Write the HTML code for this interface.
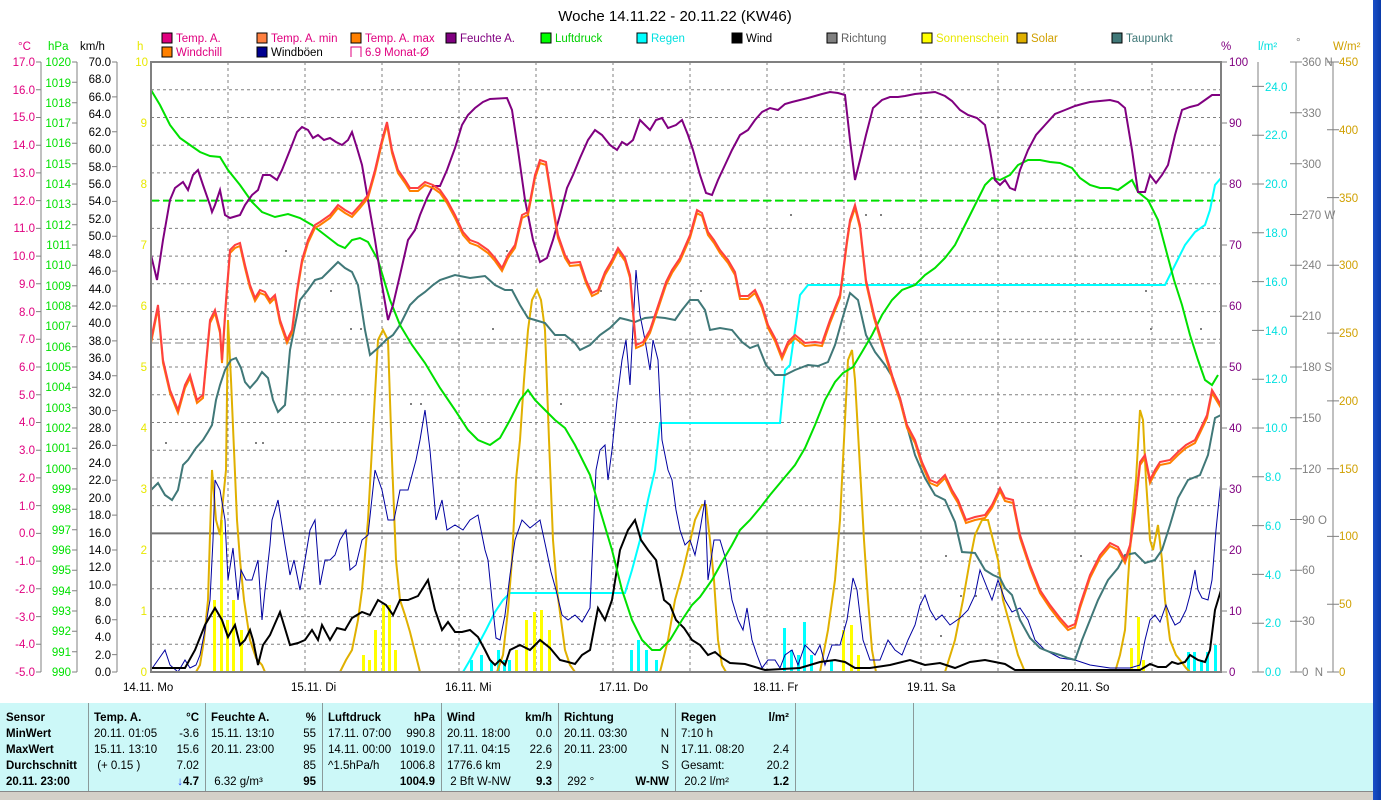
<!DOCTYPE html>
<html><head><meta charset="utf-8"><style>
html,body{margin:0;padding:0;background:#fff;width:1381px;height:800px;overflow:hidden;position:relative;font-family:"Liberation Sans",sans-serif}
svg{position:absolute;left:0;top:0}
.tb{position:absolute;left:0;top:703px;width:1373px;height:88px;background:#ccf8f8}
.c{position:absolute;top:0;height:88px;border-right:1px solid #8a9a9a;font-size:11.5px;color:#000}
.r{position:absolute;left:6px;right:6px;height:16px;line-height:16px;white-space:nowrap}
.r span{position:absolute;right:0}
.b{font-weight:bold}
.sb{position:absolute;left:0;top:791px;width:1373px;height:9px;background:#d4d0c8;border-top:1px solid #888}
.blue{position:absolute;left:1373px;top:0;width:8px;height:800px;background:linear-gradient(90deg,#1a4fc8,#0a3aa8)}
</style></head><body>
<svg width="1381" height="800" viewBox="0 0 1381 800" font-family="Liberation Sans, sans-serif" font-size="11.5">
<text x="675" y="21" font-size="15" text-anchor="middle" fill="#000">Woche 14.11.22 - 20.11.22 (KW46)</text>
<!-- legend -->
<g font-size="11.5">
<rect x="162" y="33" width="10" height="10" fill="#e0007f" stroke="#000"/><text x="176" y="42" fill="#e0007f">Temp. A.</text>
<rect x="257" y="33" width="10" height="10" fill="#ff8040" stroke="#000"/><text x="271" y="42" fill="#e0007f">Temp. A. min</text>
<rect x="351" y="33" width="10" height="10" fill="#ff8000" stroke="#000"/><text x="365" y="42" fill="#e0007f">Temp. A. max</text>
<rect x="446" y="33" width="10" height="10" fill="#800080" stroke="#000"/><text x="460" y="42" fill="#800080">Feuchte A.</text>
<rect x="541" y="33" width="10" height="10" fill="#00ff00" stroke="#000"/><text x="555" y="42" fill="#00d000">Luftdruck</text>
<rect x="637" y="33" width="10" height="10" fill="#00ffff" stroke="#000"/><text x="651" y="42" fill="#00e0e0">Regen</text>
<rect x="732" y="33" width="10" height="10" fill="#000" stroke="#000"/><text x="746" y="42" fill="#000">Wind</text>
<rect x="827" y="33" width="10" height="10" fill="#808080" stroke="#000"/><text x="841" y="42" fill="#606060">Richtung</text>
<rect x="922" y="33" width="10" height="10" fill="#ffff00" stroke="#000"/><text x="936" y="42" fill="#e8e800">Sonnenschein</text>
<rect x="1017" y="33" width="10" height="10" fill="#e0b000" stroke="#000"/><text x="1031" y="42" fill="#d0a000">Solar</text>
<rect x="1112" y="33" width="10" height="10" fill="#407878" stroke="#000"/><text x="1126" y="42" fill="#407878">Taupunkt</text>
<rect x="162" y="47" width="10" height="10" fill="#ff8000" stroke="#000"/><text x="176" y="56" fill="#e0007f">Windchill</text>
<rect x="257" y="47" width="10" height="10" fill="#000090" stroke="#000"/><text x="271" y="56" fill="#000">Windböen</text>
<path d="M351 57V47H361V57" fill="none" stroke="#e0007f"/><text x="365" y="56" fill="#e0007f">6.9 Monat-Ø</text>
</g>
<!-- units -->
<text x="18" y="50" fill="#e0007f">°C</text><text x="48" y="50" fill="#00e000">hPa</text><text x="80" y="50" fill="#000">km/h</text><text x="137" y="50" fill="#e8e800">h</text>
<text x="1221" y="50" fill="#800080">%</text><text x="1258" y="50" fill="#00e0e0">l/m²</text><text x="1296" y="46" fill="#808080">°</text><text x="1333" y="50" fill="#d0a000">W/m²</text>
<!-- grid -->
<g stroke="#808080" stroke-dasharray="3,3" stroke-width="1">
<path d="M151 89.7H1221M151 117.5H1221M151 145.2H1221M151 172.9H1221M151 200.6H1221M151 228.4H1221M151 256.1H1221M151 283.8H1221M151 311.6H1221M151 339.3H1221M151 367H1221M151 394.7H1221M151 422.5H1221M151 450.2H1221M151 477.9H1221M151 505.6H1221M151 561.1H1221M151 588.8H1221M151 616.6H1221M151 644.3H1221"/>
<path d="M228 62V672M305 62V672M382 62V672M459 62V672M536 62V672M613 62V672M690 62V672M767 62V672M844 62V672M921 62V672M998 62V672M1075 62V672M1152 62V672"/>
</g>
<path d="M151 533.4H1221" stroke="#707070" stroke-width="2"/>
<path d="M151 343H1221" stroke="#808080" stroke-dasharray="8,4"/>
<path d="M151 200.6H1221" stroke="#00e000" stroke-width="2" stroke-dasharray="8,4"/>
<!-- direction dots -->
<g fill="#808080">
<rect x="165" y="442" width="2" height="2"/><rect x="255" y="442" width="2" height="2"/><rect x="262" y="442" width="2" height="2"/><rect x="285" y="250" width="2" height="2"/><rect x="330" y="290" width="2" height="2"/><rect x="350" y="328" width="2" height="2"/><rect x="360" y="328" width="2" height="2"/><rect x="410" y="403" width="2" height="2"/><rect x="420" y="403" width="2" height="2"/><rect x="492" y="328" width="2" height="2"/><rect x="506" y="250" width="2" height="2"/><rect x="560" y="403" width="2" height="2"/><rect x="600" y="290" width="2" height="2"/><rect x="700" y="290" width="2" height="2"/><rect x="790" y="214" width="2" height="2"/><rect x="865" y="214" width="2" height="2"/><rect x="880" y="214" width="2" height="2"/><rect x="945" y="555" width="2" height="2"/><rect x="960" y="595" width="2" height="2"/><rect x="975" y="595" width="2" height="2"/><rect x="940" y="635" width="2" height="2"/><rect x="1080" y="555" width="2" height="2"/><rect x="1145" y="290" width="2" height="2"/><rect x="1150" y="328" width="2" height="2"/><rect x="1200" y="328" width="2" height="2"/>
</g>
<!-- sunshine bars -->
<g fill="#ffff00">
<rect x="213" y="600" width="3" height="72"/><rect x="220" y="520" width="3" height="152"/><rect x="226" y="620" width="3" height="52"/><rect x="232" y="600" width="3" height="72"/><rect x="240" y="630" width="3" height="42"/><rect x="362" y="655" width="3" height="17"/><rect x="368" y="660" width="3" height="12"/><rect x="374" y="630" width="3" height="42"/><rect x="382" y="605" width="3" height="67"/><rect x="388" y="605" width="3" height="67"/><rect x="394" y="650" width="3" height="22"/><rect x="515" y="650" width="3" height="22"/><rect x="525" y="620" width="3" height="52"/><rect x="533" y="612" width="3" height="60"/><rect x="540" y="610" width="3" height="62"/><rect x="548" y="630" width="3" height="42"/><rect x="842" y="630" width="3" height="42"/><rect x="850" y="625" width="3" height="47"/><rect x="857" y="655" width="3" height="17"/><rect x="1130" y="648" width="3" height="24"/><rect x="1137" y="617" width="3" height="55"/><rect x="1142" y="660" width="3" height="12"/>
</g>
<!-- rain bars -->
<g fill="#00ffff">
<rect x="470" y="660" width="3" height="12"/><rect x="480" y="655" width="3" height="17"/><rect x="490" y="662" width="3" height="10"/><rect x="497" y="650" width="3" height="22"/><rect x="503" y="660" width="3" height="12"/><rect x="508" y="660" width="3" height="12"/><rect x="630" y="650" width="3" height="22"/><rect x="637" y="640" width="3" height="32"/><rect x="645" y="650" width="3" height="22"/><rect x="655" y="660" width="3" height="12"/><rect x="783" y="628" width="3" height="44"/><rect x="790" y="650" width="3" height="22"/><rect x="797" y="655" width="3" height="17"/><rect x="803" y="622" width="3" height="50"/><rect x="810" y="655" width="3" height="17"/><rect x="830" y="660" width="3" height="12"/><rect x="1187" y="652" width="3" height="20"/><rect x="1193" y="652" width="3" height="20"/><rect x="1200" y="660" width="3" height="12"/><rect x="1206" y="652" width="3" height="20"/><rect x="1214" y="645" width="3" height="27"/>
</g>
<!-- rain cumulative -->
<polyline fill="none" stroke="#00ffff" stroke-width="2" points="151,672 463,672 470,660 478,645 486,630 495,612 503,600 510,593 625,593 632,570 640,540 648,500 655,470 660,423 780,423 785,370 790,365 800,295 808,285 830,285 1165,285 1175,265 1185,245 1195,232 1205,225 1210,210 1215,185 1221,178"/>
<!-- solar -->
<polyline fill="none" stroke="#e0b000" stroke-width="2" points="151,672 196,672 200,665 204,640 208,600 212,470 216,520 220,535 223,500 226,470 228,320 231,380 234,450 237,520 240,560 244,600 250,640 256,658 262,665 265,672 340,672 346,660 352,650 358,620 362,590 368,520 373,430 378,340 383,330 388,340 392,460 396,560 400,600 405,615 410,632 417,660 420,672 497,672 503,655 508,610 512,560 516,480 520,440 524,380 528,330 532,300 537,290 541,300 545,330 549,440 553,540 557,590 561,620 565,650 570,665 575,672 660,672 668,640 675,600 682,575 688,550 695,520 702,505 706,505 710,540 714,580 718,640 722,665 726,672 820,672 828,630 835,580 840,520 845,420 848,360 852,350 855,380 859,450 864,540 868,600 872,650 876,672 945,672 955,640 963,600 970,560 975,535 982,520 988,520 993,540 998,560 1003,600 1010,625 1018,655 1025,672 1115,672 1120,655 1125,630 1128,580 1132,520 1136,480 1140,410 1143,420 1146,480 1150,540 1153,550 1158,525 1162,560 1165,600 1170,640 1176,655 1180,660 1186,668 1190,672 1221,672"/>
<!-- gusts -->
<polyline fill="none" stroke="#0000a0" stroke-width="1" points="151,670 158,660 165,650 170,665 178,672 185,660 190,668 196,665 200,655 205,630 210,600 213,540 215,480 220,490 225,520 228,580 233,548 238,600 241,570 246,580 252,580 258,560 262,620 265,590 270,545 272,520 278,500 285,545 290,575 294,560 300,590 305,560 310,530 315,520 320,585 325,560 330,560 335,555 340,540 346,530 350,570 356,565 362,540 368,535 375,470 382,490 388,520 394,520 400,490 408,490 416,460 420,440 425,410 430,450 436,520 442,500 447,530 455,525 463,530 470,520 478,515 485,550 488,560 492,600 496,638 500,640 505,615 510,575 515,540 522,520 530,528 540,520 546,548 551,572 556,590 562,615 568,620 575,615 582,622 590,608 596,470 600,450 605,445 608,480 612,450 617,400 622,360 626,340 630,385 636,270 640,315 645,340 650,370 653,340 658,360 662,440 668,470 672,480 676,510 680,530 685,545 690,540 695,555 700,530 705,500 708,580 714,540 720,540 726,560 732,600 738,620 743,630 747,608 752,640 757,655 762,668 768,660 775,660 780,668 785,655 792,650 798,665 805,645 810,650 815,655 820,645 825,665 832,645 840,645 847,620 853,578 857,590 863,640 870,660 880,660 888,640 895,650 902,655 908,640 915,625 920,605 925,595 930,610 936,620 942,615 950,625 960,618 968,610 975,595 980,570 986,585 992,600 998,580 1005,600 1012,612 1020,608 1028,620 1035,640 1045,650 1060,658 1075,660 1090,665 1110,668 1130,668 1140,665 1145,640 1150,620 1155,615 1160,622 1166,605 1170,615 1175,625 1180,622 1186,610 1190,595 1195,570 1198,590 1202,598 1208,600 1212,580 1216,530 1221,480"/>
<!-- wind -->
<polyline fill="none" stroke="#000" stroke-width="2" points="151,668 185,668 195,650 205,625 215,608 222,620 228,637 235,625 240,645 245,640 250,630 253,640 258,665 263,645 270,635 280,612 290,645 298,643 305,640 312,630 318,640 322,625 330,640 337,628 345,630 352,618 362,612 370,615 378,600 386,605 393,615 400,600 408,600 418,596 428,580 435,610 442,630 448,622 455,632 462,632 470,630 478,637 485,650 490,660 495,665 500,660 505,665 510,650 520,645 530,650 540,640 550,648 560,660 568,662 575,664 582,655 590,650 598,608 605,620 612,600 620,550 628,530 635,520 641,540 648,550 656,560 664,600 670,605 676,620 684,628 692,640 700,645 708,655 715,652 722,658 730,663 745,664 755,667 765,670 800,668 820,662 835,660 845,662 855,668 870,668 890,665 910,660 925,665 940,663 955,668 970,662 985,660 995,662 1005,664 1015,670 1140,670 1150,664 1158,667 1166,667 1172,662 1178,664 1185,662 1190,655 1198,660 1205,662 1210,650 1215,610 1221,590"/>
<!-- dew point -->
<polyline fill="none" stroke="#407878" stroke-width="2" points="151,490 158,483 165,495 172,500 178,490 183,465 188,460 196,448 203,440 208,432 212,425 216,400 220,385 225,370 231,360 236,358 241,368 245,382 250,388 257,380 262,372 268,378 273,400 278,412 285,405 290,350 300,300 308,290 315,280 322,278 330,270 338,262 345,268 352,272 358,285 365,330 370,355 378,348 386,340 393,335 400,325 410,305 418,297 425,292 433,285 440,280 455,275 470,278 485,276 495,285 505,290 512,290 520,305 528,318 535,320 545,323 555,335 565,335 575,343 580,350 590,345 600,335 610,328 620,318 628,320 635,322 645,318 655,317 665,318 675,320 682,310 690,300 698,300 705,310 710,330 720,328 732,330 742,342 750,348 758,345 766,365 775,375 785,375 795,370 808,365 818,366 828,362 835,345 842,320 850,293 858,300 866,335 875,352 885,365 893,378 900,398 908,430 915,455 925,478 935,495 945,500 955,522 962,552 975,553 985,570 993,575 1000,578 1005,588 1012,595 1020,620 1030,638 1040,648 1050,652 1060,655 1068,658 1075,660 1082,640 1090,620 1098,600 1108,580 1118,568 1125,555 1135,553 1145,563 1155,560 1162,550 1170,525 1178,498 1188,480 1200,475 1208,455 1215,418 1221,415"/>
<!-- pressure -->
<polyline fill="none" stroke="#00e000" stroke-width="2" points="151,90 160,105 170,125 180,138 190,145 200,152 210,156 220,157 228,170 240,185 252,202 262,212 275,217 288,214 300,218 312,225 325,235 338,245 345,248 352,240 360,238 368,242 378,260 390,300 400,325 412,345 425,363 440,388 455,410 468,430 478,440 490,445 500,438 510,420 520,400 528,390 535,400 545,410 555,420 565,428 575,445 590,475 600,510 612,550 622,590 632,620 642,640 652,650 660,650 670,640 682,620 692,605 700,597 712,580 722,562 732,545 740,530 750,520 760,508 770,495 780,483 795,465 805,448 815,425 825,400 835,382 843,373 853,367 862,352 872,335 882,315 892,300 902,290 915,285 925,275 935,268 945,258 955,245 965,225 975,205 985,185 992,178 1000,180 1010,175 1018,165 1028,160 1040,160 1050,162 1060,163 1072,168 1080,178 1090,185 1100,188 1110,188 1118,190 1125,185 1132,180 1138,192 1148,200 1158,220 1166,250 1174,280 1182,305 1190,335 1198,360 1205,380 1212,385 1218,375"/>
<!-- humidity -->
<polyline fill="none" stroke="#800080" stroke-width="2" points="151,255 157,280 163,240 170,200 175,188 183,182 188,190 193,175 198,170 203,185 210,205 212,212 215,205 220,190 225,215 230,218 240,215 245,205 252,195 258,190 263,175 270,175 277,180 282,170 290,150 297,132 302,127 308,130 313,138 318,135 324,140 330,138 336,142 342,145 348,140 352,132 357,148 362,165 368,200 375,240 382,285 388,320 393,305 400,275 408,240 415,230 420,215 427,198 433,186 440,186 447,170 455,148 462,125 468,115 475,108 483,102 490,99 507,98 512,110 518,150 525,200 533,240 540,262 547,258 553,240 560,215 567,188 573,175 580,158 588,140 595,130 602,135 610,145 617,150 622,142 627,145 633,140 640,120 645,125 650,130 656,120 662,118 668,128 676,125 682,120 688,135 693,150 700,175 706,193 712,195 718,180 725,165 732,150 740,135 748,130 755,120 762,112 770,108 778,110 785,104 792,102 800,100 808,98 815,96 822,94 830,92 838,93 845,95 850,140 855,180 860,160 866,135 873,108 882,100 890,97 898,97 905,96 915,94 935,92 945,96 952,101 960,110 968,115 977,118 985,125 990,150 995,180 1000,185 1005,180 1010,188 1015,190 1020,170 1028,150 1036,135 1045,125 1055,114 1065,110 1075,106 1082,104 1090,102 1110,100 1118,102 1125,108 1132,150 1138,192 1145,192 1150,175 1156,183 1162,175 1168,165 1175,135 1182,110 1190,107 1198,105 1205,100 1212,95 1221,95"/>
<!-- temp min/max shadow + temp -->
<polyline fill="none" stroke="#ff8000" stroke-width="2" transform="translate(0,3)" points="151,340 158,305 163,360 170,390 178,410 185,385 190,375 197,400 203,395 210,320 215,310 220,330 222,360 226,300 230,250 235,245 240,243 245,265 250,285 255,298 260,290 265,292 270,300 275,295 280,320 287,340 292,330 297,290 302,260 308,240 315,225 320,222 330,215 338,205 345,210 352,214 360,205 368,195 375,170 382,140 387,122 392,150 398,170 405,180 410,188 418,188 425,182 433,185 440,190 447,200 455,215 463,232 470,240 478,243 488,250 495,258 502,268 508,255 515,245 522,215 528,212 535,175 540,160 546,162 552,200 558,235 565,255 570,263 580,262 586,280 592,293 598,290 605,272 612,260 618,248 625,258 630,275 636,345 643,342 650,330 660,300 666,282 672,270 680,258 690,235 697,210 702,213 708,232 714,240 720,250 728,260 735,272 740,296 748,296 755,290 762,305 768,325 775,338 782,356 788,342 795,335 805,343 815,342 822,343 830,320 840,295 847,240 850,220 855,205 860,225 866,280 874,315 880,335 887,358 893,378 900,398 907,425 915,440 922,462 930,480 937,483 945,475 952,490 958,500 966,520 975,517 985,515 992,505 1000,488 1005,498 1013,500 1020,535 1030,565 1040,590 1050,605 1060,618 1068,627 1075,624 1080,605 1090,575 1100,555 1110,543 1118,547 1125,560 1130,545 1135,510 1140,462 1145,455 1150,480 1155,470 1160,462 1170,460 1178,452 1186,445 1195,440 1200,430 1207,415 1212,390 1218,400 1221,405"/>
<polyline fill="none" stroke="#ff4040" stroke-width="2" points="151,340 158,305 163,360 170,390 178,410 185,385 190,375 197,400 203,395 210,320 215,310 220,330 222,360 226,300 230,250 235,245 240,243 245,265 250,285 255,298 260,290 265,292 270,300 275,295 280,320 287,340 292,330 297,290 302,260 308,240 315,225 320,222 330,215 338,205 345,210 352,214 360,205 368,195 375,170 382,140 387,122 392,150 398,170 405,180 410,188 418,188 425,182 433,185 440,190 447,200 455,215 463,232 470,240 478,243 488,250 495,258 502,268 508,255 515,245 522,215 528,212 535,175 540,160 546,162 552,200 558,235 565,255 570,263 580,262 586,280 592,293 598,290 605,272 612,260 618,248 625,258 630,275 636,345 643,342 650,330 660,300 666,282 672,270 680,258 690,235 697,210 702,213 708,232 714,240 720,250 728,260 735,272 740,296 748,296 755,290 762,305 768,325 775,338 782,356 788,342 795,335 805,343 815,342 822,343 830,320 840,295 847,240 850,220 855,205 860,225 866,280 874,315 880,335 887,358 893,378 900,398 907,425 915,440 922,462 930,480 937,483 945,475 952,490 958,500 966,520 975,517 985,515 992,505 1000,488 1005,498 1013,500 1020,535 1030,565 1040,590 1050,605 1060,618 1068,627 1075,624 1080,605 1090,575 1100,555 1110,543 1118,547 1125,560 1130,545 1135,510 1140,462 1145,455 1150,480 1155,470 1160,462 1170,460 1178,452 1186,445 1195,440 1200,430 1207,415 1212,390 1218,400 1221,405"/>
<!-- plot border -->
<path d="M151 62H1221V672H151Z" fill="none" stroke="#808080" stroke-width="2"/>
<!-- left axes lines -->
<g stroke="#808080" fill="none">
<path d="M41 62V672M77 62V672M117 62V672M1258 62V672M1296 62V672M1333 62V672"/>
<path d="M36 62H41M36 89.7H41M36 117.5H41M36 145.2H41M36 172.9H41M36 200.6H41M36 228.4H41M36 256.1H41M36 283.8H41M36 311.6H41M36 339.3H41M36 367H41M36 394.7H41M36 422.5H41M36 450.2H41M36 477.9H41M36 505.6H41M36 533.4H41M36 561.1H41M36 588.8H41M36 616.6H41M36 644.3H41M36 672H41"/>
<path d="M72 62H77M72 82.3H77M72 102.7H77M72 123H77M72 143.3H77M72 163.7H77M72 184H77M72 204.3H77M72 224.7H77M72 245H77M72 265.3H77M72 285.7H77M72 306H77M72 326.3H77M72 346.7H77M72 367H77M72 387.3H77M72 407.7H77M72 428H77M72 448.3H77M72 468.7H77M72 489H77M72 509.3H77M72 529.7H77M72 550H77M72 570.3H77M72 590.7H77M72 611H77M72 631.3H77M72 651.7H77M72 672H77"/>
<path d="M112 62H117M112 96.9H117M112 131.7H117M112 166.6H117M112 201.4H117M112 236.3H117M112 271.1H117M112 306H117M112 340.9H117M112 375.7H117M112 410.6H117M112 445.4H117M112 480.3H117M112 515.1H117M112 550H117M112 584.9H117M112 619.7H117M112 654.6H117M112 672H117"/>
<path d="M1221 62H1227M1221 123H1227M1221 184H1227M1221 245H1227M1221 306H1227M1221 367H1227M1221 428H1227M1221 489H1227M1221 550H1227M1221 611H1227M1221 672H1227"/>
<path d="M1252 86.4H1264M1252 135.2H1264M1252 184H1264M1252 232.8H1264M1252 281.6H1264M1252 330.4H1264M1252 379.2H1264M1252 428H1264M1252 476.8H1264M1252 525.6H1264M1252 574.4H1264M1252 623.2H1264M1252 672H1264"/>
<path d="M1290 62H1302M1290 112.8H1302M1290 163.7H1302M1290 214.5H1302M1290 265.3H1302M1290 316.2H1302M1290 367H1302M1290 417.8H1302M1290 468.7H1302M1290 519.5H1302M1290 570.3H1302M1290 621.2H1302M1290 672H1302"/>
<path d="M1327 62H1339M1327 129.8H1339M1327 197.6H1339M1327 265.3H1339M1327 333.1H1339M1327 400.9H1339M1327 468.7H1339M1327 536.4H1339M1327 604.2H1339M1327 672H1339"/>
</g>
<g fill="#e0007f" text-anchor="end">
<text x="35" y="66">17.0</text><text x="35" y="94">16.0</text><text x="35" y="121">15.0</text><text x="35" y="149">14.0</text><text x="35" y="177">13.0</text><text x="35" y="205">12.0</text><text x="35" y="232">11.0</text><text x="35" y="260">10.0</text><text x="35" y="288">9.0</text><text x="35" y="316">8.0</text><text x="35" y="343">7.0</text><text x="35" y="371">6.0</text><text x="35" y="399">5.0</text><text x="35" y="426">4.0</text><text x="35" y="454">3.0</text><text x="35" y="482">2.0</text><text x="35" y="510">1.0</text><text x="35" y="537">0.0</text><text x="35" y="565">-1.0</text><text x="35" y="593">-2.0</text><text x="35" y="621">-3.0</text><text x="35" y="648">-4.0</text><text x="35" y="676">-5.0</text>
</g>
<g fill="#00e000" text-anchor="end">
<text x="71" y="66">1020</text><text x="71" y="87">1019</text><text x="71" y="107">1018</text><text x="71" y="127">1017</text><text x="71" y="147">1016</text><text x="71" y="168">1015</text><text x="71" y="188">1014</text><text x="71" y="208">1013</text><text x="71" y="229">1012</text><text x="71" y="249">1011</text><text x="71" y="269">1010</text><text x="71" y="290">1009</text><text x="71" y="310">1008</text><text x="71" y="330">1007</text><text x="71" y="351">1006</text><text x="71" y="371">1005</text><text x="71" y="391">1004</text><text x="71" y="412">1003</text><text x="71" y="432">1002</text><text x="71" y="452">1001</text><text x="71" y="473">1000</text><text x="71" y="493">999</text><text x="71" y="513">998</text><text x="71" y="534">997</text><text x="71" y="554">996</text><text x="71" y="574">995</text><text x="71" y="595">994</text><text x="71" y="615">993</text><text x="71" y="635">992</text><text x="71" y="656">991</text><text x="71" y="676">990</text>
</g>
<g fill="#000" text-anchor="end">
<text x="111" y="66">70.0</text><text x="111" y="83">68.0</text><text x="111" y="101">66.0</text><text x="111" y="118">64.0</text><text x="111" y="136">62.0</text><text x="111" y="153">60.0</text><text x="111" y="171">58.0</text><text x="111" y="188">56.0</text><text x="111" y="205">54.0</text><text x="111" y="223">52.0</text><text x="111" y="240">50.0</text><text x="111" y="258">48.0</text><text x="111" y="275">46.0</text><text x="111" y="293">44.0</text><text x="111" y="310">42.0</text><text x="111" y="327">40.0</text><text x="111" y="345">38.0</text><text x="111" y="362">36.0</text><text x="111" y="380">34.0</text><text x="111" y="397">32.0</text><text x="111" y="415">30.0</text><text x="111" y="432">28.0</text><text x="111" y="449">26.0</text><text x="111" y="467">24.0</text><text x="111" y="484">22.0</text><text x="111" y="502">20.0</text><text x="111" y="519">18.0</text><text x="111" y="537">16.0</text><text x="111" y="554">14.0</text><text x="111" y="571">12.0</text><text x="111" y="589">10.0</text><text x="111" y="606">8.0</text><text x="111" y="624">6.0</text><text x="111" y="641">4.0</text><text x="111" y="659">2.0</text><text x="111" y="676">0.0</text>
</g>
<g fill="#e8e800" text-anchor="end">
<text x="148" y="66">10</text><text x="147" y="127">9</text><text x="147" y="188">8</text><text x="147" y="249">7</text><text x="147" y="310">6</text><text x="147" y="371">5</text><text x="147" y="432">4</text><text x="147" y="493">3</text><text x="147" y="554">2</text><text x="147" y="615">1</text><text x="147" y="676">0</text>
</g>
<g fill="#800080">
<text x="1229" y="66">100</text><text x="1229" y="127">90</text><text x="1229" y="188">80</text><text x="1229" y="249">70</text><text x="1229" y="310">60</text><text x="1229" y="371">50</text><text x="1229" y="432">40</text><text x="1229" y="493">30</text><text x="1229" y="554">20</text><text x="1229" y="615">10</text><text x="1229" y="676">0</text>
</g>
<g fill="#00e0e0">
<text x="1265" y="91">24.0</text><text x="1265" y="139">22.0</text><text x="1265" y="188">20.0</text><text x="1265" y="237">18.0</text><text x="1265" y="286">16.0</text><text x="1265" y="335">14.0</text><text x="1265" y="383">12.0</text><text x="1265" y="432">10.0</text><text x="1265" y="481">8.0</text><text x="1265" y="530">6.0</text><text x="1265" y="579">4.0</text><text x="1265" y="627">2.0</text><text x="1265" y="676">0.0</text>
</g>
<g fill="#808080">
<text x="1302" y="66">360 N</text><text x="1302" y="117">330</text><text x="1302" y="168">300</text><text x="1302" y="219">270 W</text><text x="1302" y="269">240</text><text x="1302" y="320">210</text><text x="1302" y="371">180 S</text><text x="1302" y="422">150</text><text x="1302" y="473">120</text><text x="1302" y="524">90 O</text><text x="1302" y="574">60</text><text x="1302" y="625">30</text><text x="1302" y="676">0 &#160;N</text>
</g>
<g fill="#d0a000">
<text x="1339" y="66">450</text><text x="1339" y="134">400</text><text x="1339" y="202">350</text><text x="1339" y="269">300</text><text x="1339" y="337">250</text><text x="1339" y="405">200</text><text x="1339" y="473">150</text><text x="1339" y="540">100</text><text x="1339" y="608">50</text><text x="1339" y="676">0</text>
</g>
<g fill="#000">
<text x="123" y="691">14.11. Mo</text><text x="291" y="691">15.11. Di</text><text x="445" y="691">16.11. Mi</text><text x="599" y="691">17.11. Do</text><text x="753" y="691">18.11. Fr</text><text x="907" y="691">19.11. Sa</text><text x="1061" y="691">20.11. So</text>
</g>
</svg>

<div class="tb">
<div class="c" style="left:0;width:88px"><div class="r b" style="top:7px">Sensor</div><div class="r b" style="top:23px">MinWert</div><div class="r b" style="top:39px">MaxWert</div><div class="r b" style="top:55px">Durchschnitt</div><div class="r b" style="top:71px">20.11. 23:00</div></div>
<div class="c" style="left:88px;width:117px"><div class="r b" style="top:7px">Temp. A.<span>°C</span></div><div class="r" style="top:23px">20.11. 01:05<span>-3.6</span></div><div class="r" style="top:39px">15.11. 13:10<span>15.6</span></div><div class="r" style="top:55px">&#160;(+ 0.15 )<span>7.02</span></div><div class="r b" style="top:71px"><span><b style="color:#2040ff">↓</b>4.7</span></div></div>
<div class="c" style="left:205px;width:117px"><div class="r b" style="top:7px">Feuchte A.<span>%</span></div><div class="r" style="top:23px">15.11. 13:10<span>55</span></div><div class="r" style="top:39px">20.11. 23:00<span>95</span></div><div class="r" style="top:55px"><span>85</span></div><div class="r" style="top:71px">&#160;6.32 g/m³<span class="b">95</span></div></div>
<div class="c" style="left:322px;width:119px"><div class="r b" style="top:7px">Luftdruck<span>hPa</span></div><div class="r" style="top:23px">17.11. 07:00<span>990.8</span></div><div class="r" style="top:39px">14.11. 00:00<span>1019.0</span></div><div class="r" style="top:55px">^1.5hPa/h<span>1006.8</span></div><div class="r" style="top:71px"><span class="b">1004.9</span></div></div>
<div class="c" style="left:441px;width:117px"><div class="r b" style="top:7px">Wind<span>km/h</span></div><div class="r" style="top:23px">20.11. 18:00<span>0.0</span></div><div class="r" style="top:39px">17.11. 04:15<span>22.6</span></div><div class="r" style="top:55px">1776.6 km<span>2.9</span></div><div class="r" style="top:71px">&#160;2 Bft W-NW<span class="b">9.3</span></div></div>
<div class="c" style="left:558px;width:117px"><div class="r b" style="top:7px">Richtung</div><div class="r" style="top:23px">20.11. 03:30<span>N</span></div><div class="r" style="top:39px">20.11. 23:00<span>N</span></div><div class="r" style="top:55px"><span>S</span></div><div class="r" style="top:71px">&#160;292 °<span class="b">W-NW</span></div></div>
<div class="c" style="left:675px;width:120px"><div class="r b" style="top:7px">Regen<span>l/m²</span></div><div class="r" style="top:23px">7:10 h</div><div class="r" style="top:39px">17.11. 08:20<span>2.4</span></div><div class="r" style="top:55px">Gesamt:<span>20.2</span></div><div class="r" style="top:71px">&#160;20.2 l/m²<span class="b">1.2</span></div></div>
<div class="c" style="left:795px;width:118px"></div>
</div>
<div class="sb"></div>
<div class="blue"></div>
</body></html>
